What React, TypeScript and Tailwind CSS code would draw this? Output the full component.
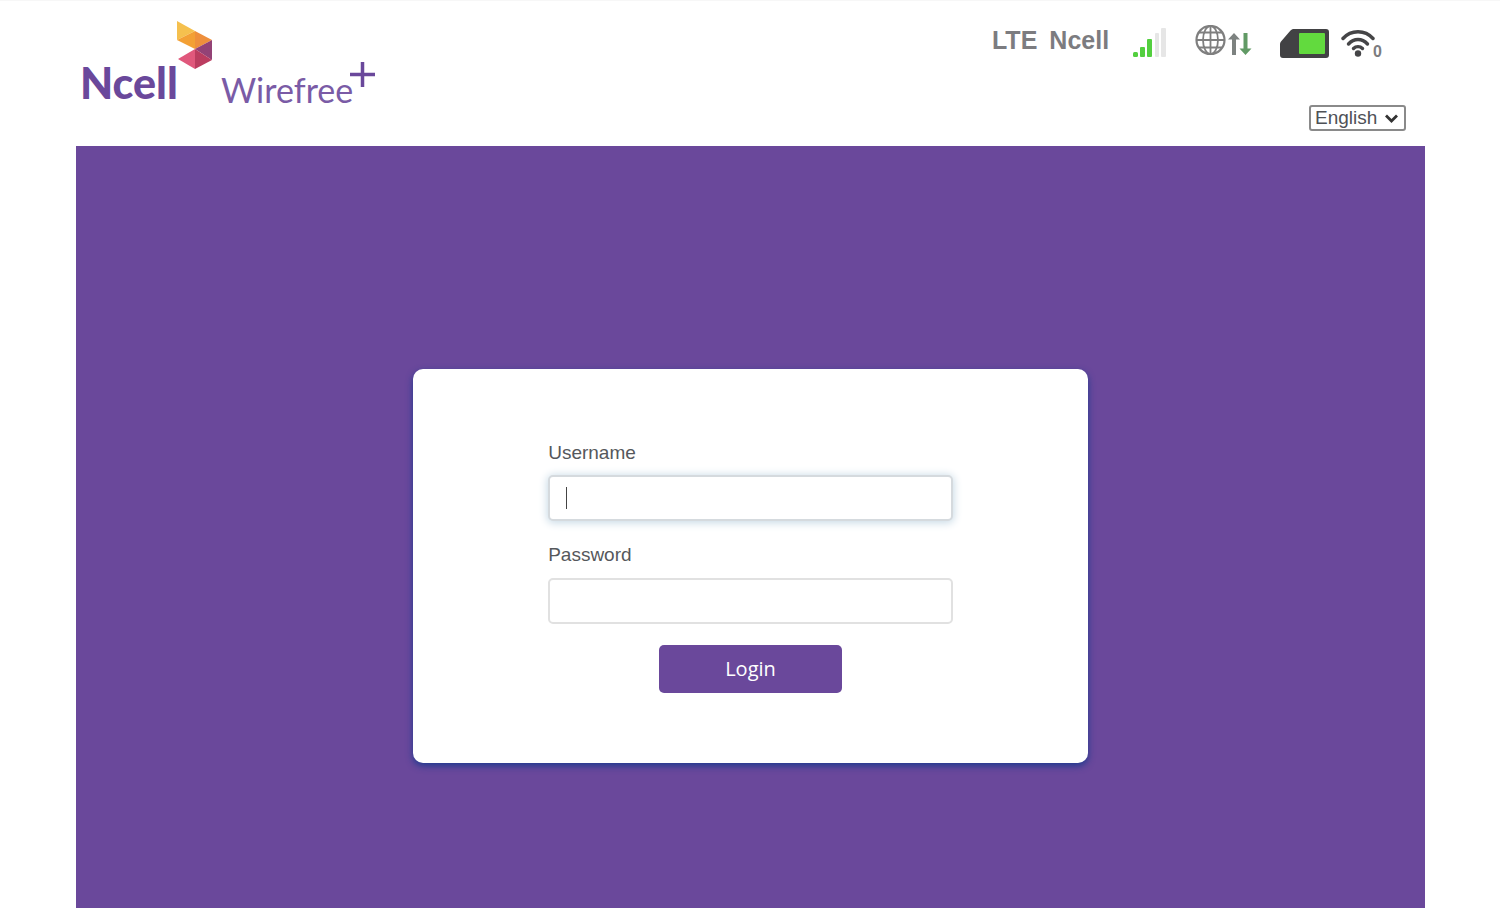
import React, { useState } from "react";

const BrandMark: React.FC = () => (
  <svg
    className="absolute left-24 top-0"
    width="37"
    height="50"
    viewBox="0 0 37 50"
    aria-hidden="true"
  >
    <polygon points="1,1 19,11 1,20" fill="#f5c04e" />
    <polygon points="1,20 19,11 19,29" fill="#f3a035" />
    <polygon points="19,11 36,20 19,29" fill="#ee8f3c" />
    <polygon points="36,20 36,40 19,29" fill="#934276" />
    <polygon points="19,29 36,40 19,49" fill="#bb3d60" />
    <polygon points="19,29 19,49 2,39" fill="#e0587c" />
  </svg>
);

const Logo: React.FC = () => (
  <a
    href="#"
    aria-label="Ncell Wirefree+"
    className="relative flex items-start font-[Lato,sans-serif] text-[#6a489b]"
  >
    <BrandMark />
    <span className="w-[141px] pt-[35px] text-[43px] leading-[56px] font-black">
      Ncell
    </span>
    <span className="pt-[49px] text-[34px] leading-[42px] font-normal text-[#7a5ba6]">
      Wirefree
    </span>
    <svg
      className="absolute left-[270px] top-[42px]"
      width="26"
      height="26"
      viewBox="0 0 26 26"
      stroke="currentColor"
      strokeWidth="3.5"
      aria-hidden="true"
    >
      <path d="M12.500 0v25M0 12.500h25" />
    </svg>
  </a>
);

const SignalIcon: React.FC = () => (
  <svg width="34" height="30" viewBox="0 0 34 30" aria-label="Signal strength">
    <g fill="#53cf3f">
      <rect x="0" y="24" width="5" height="5" rx="1.5" />
      <rect x="7" y="19" width="5" height="10" rx="1" />
      <rect x="14" y="11" width="5" height="18" rx="1" />
    </g>
    <g fill="#e6e6e6">
      <rect x="22" y="5" width="4" height="24" rx="1" />
      <rect x="28" y="0" width="5" height="29" rx="1" />
    </g>
  </svg>
);

const NetworkIcon: React.FC = () => (
  <svg width="57" height="32" viewBox="0 0 57 32" fill="none" aria-label="Data">
    <g stroke="#7f7f7f">
      <circle cx="15.5" cy="15" r="14" strokeWidth="2.2" />
      <ellipse cx="15.5" cy="15" rx="7.5" ry="14" strokeWidth="1.8" />
      <path d="M15.500 1v28M1.500 15h28M4 7.500h23M4 22.500h23" strokeWidth="1.8" />
    </g>
    <path d="M39 8l6 6.500h-4V30h-4V14.500h-4z" fill="#7d8280" />
    <path d="M50.500 30l-6-6.500h4V8h4v15.500h4z" fill="#619a65" />
  </svg>
);

const SimIcon: React.FC = () => (
  <svg width="49" height="29" viewBox="0 0 49 29" aria-label="SIM card">
    <path
      d="M13 0h33q3 0 3 3v23q0 3-3 3H3q-3 0-3-3V15q0-1.500 1-2.500L10.500 1.500Q12 0 13 0z"
      fill="#424244"
    />
    <rect x="19" y="4" width="26" height="21" rx="1" fill="#62da3e" />
  </svg>
);

const WifiIcon: React.FC = () => (
  <svg width="34" height="28" viewBox="0 0 34 28" fill="none" aria-label="Wi-Fi">
    <g stroke="#454547" strokeWidth="3.4" strokeLinecap="round">
      <path d="M2 9.500C10 .500 24 .500 32 9.500" />
      <path d="M7.500 15C13 9 21 9 26.500 15" />
      <path d="M12.500 19.500C15 17 19 17 21.500 19.500" />
    </g>
    <circle cx="17" cy="24.500" r="3.200" fill="#454547" />
  </svg>
);

const StatusBar: React.FC = () => (
  <div className="flex items-start pr-6 text-[25px] leading-[30px] font-bold text-[#7c7c80]">
    <span className="pr-3">LTE</span>
    <span className="pr-6">Ncell</span>
    <div className="flex items-start">
      <div className="pt-[3px] pr-7">
        <SignalIcon />
      </div>
      <div className="pr-7">
        <NetworkIcon />
      </div>
      <div className="pt-1 pr-3">
        <SimIcon />
      </div>
      <div className="flex items-start pt-1">
        <WifiIcon />
        <span className="-ml-0.5 pt-[15px] text-base leading-4 text-[#7c7c80]">0</span>
      </div>
    </div>
  </div>
);

const LanguageSelect: React.FC = () => {
  const [language, setLanguage] = useState("en");

  return (
    <div className="relative">
      <select
        aria-label="Language"
        value={language}
        onChange={(e) => setLanguage(e.target.value)}
        className="block h-[26px] w-[97px] appearance-none rounded-[3px] border-2 border-[#8a8a8a] bg-white pl-1 text-[19px] leading-[22px] text-[#4e5156]"
      >
        <option value="en">English</option>
        <option value="ne">नेपाली</option>
      </select>
      <svg
        className="pointer-events-none absolute right-2 top-[9px]"
        width="13"
        height="9"
        viewBox="0 0 13 9"
        fill="none"
        stroke="#333"
        strokeWidth="2.8"
        aria-hidden="true"
      >
        <path d="M1 1.500l5.500 5.500L12 1.500" />
      </svg>
    </div>
  );
};

const LoginForm: React.FC = () => {
  const [username, setUsername] = useState("");
  const [password, setPassword] = useState("");

  return (
    <form
      onSubmit={(e) => e.preventDefault()}
      className="w-1/2 rounded-[10px] bg-white pt-[69px] pb-[70px] shadow-[0_3px_7px_0_#1f3a8f]"
    >
      <div className="mx-auto w-3/5">
        <label
          htmlFor="username"
          className="block text-[19px] leading-[30px] text-[#55585c]"
        >
          Username
        </label>
        <div className="relative mt-[7px]">
          <input
            id="username"
            type="text"
            autoFocus
            value={username}
            onChange={(e) => setUsername(e.target.value)}
            className="block h-[46px] w-full rounded-[5px] border-2 border-[#d5dade] bg-white px-4 text-[19px] text-[#55585c] caret-transparent shadow-[0_1px_8px_1px_#c8dae6] outline-none"
          />
          {username === "" && (
            <span className="pointer-events-none absolute left-[18px] top-3 h-[22px] w-px bg-[#444]" />
          )}
        </div>
        <label
          htmlFor="password"
          className="mt-[19px] block text-[19px] leading-[30px] text-[#55585c]"
        >
          Password
        </label>
        <input
          id="password"
          type="password"
          value={password}
          onChange={(e) => setPassword(e.target.value)}
          className="mt-2 block h-[46px] w-full rounded-[5px] border-2 border-[#e1e1e1] bg-white px-4 text-[19px] text-[#55585c] outline-none"
        />
        <button
          type="submit"
          className="mx-auto mt-[21px] block h-[48px] w-[183px] rounded-[5px] bg-[#6a489b] font-['Open_Sans',sans-serif] text-xl leading-[30px] text-white"
        >
          Login
        </button>
      </div>
    </form>
  );
};

const App: React.FC = () => {
  return (
    <div className="flex min-h-screen flex-col border-t border-[#f7f7f7] bg-white px-[76px] font-['Liberation_Sans',Arial,sans-serif]">
      <header className="flex h-[145px] items-start justify-between pl-1 pr-[18px] pt-[19px]">
        <Logo />
        <div className="flex flex-col items-end pt-[5px]">
          <StatusBar />
          <div className="pt-[45px]">
            <LanguageSelect />
          </div>
        </div>
      </header>
      <main className="-mr-px flex flex-1 items-start justify-center bg-[#6a489b] pt-[223px] pb-[145px]">
        <LoginForm />
      </main>
    </div>
  );
};

export default App;
